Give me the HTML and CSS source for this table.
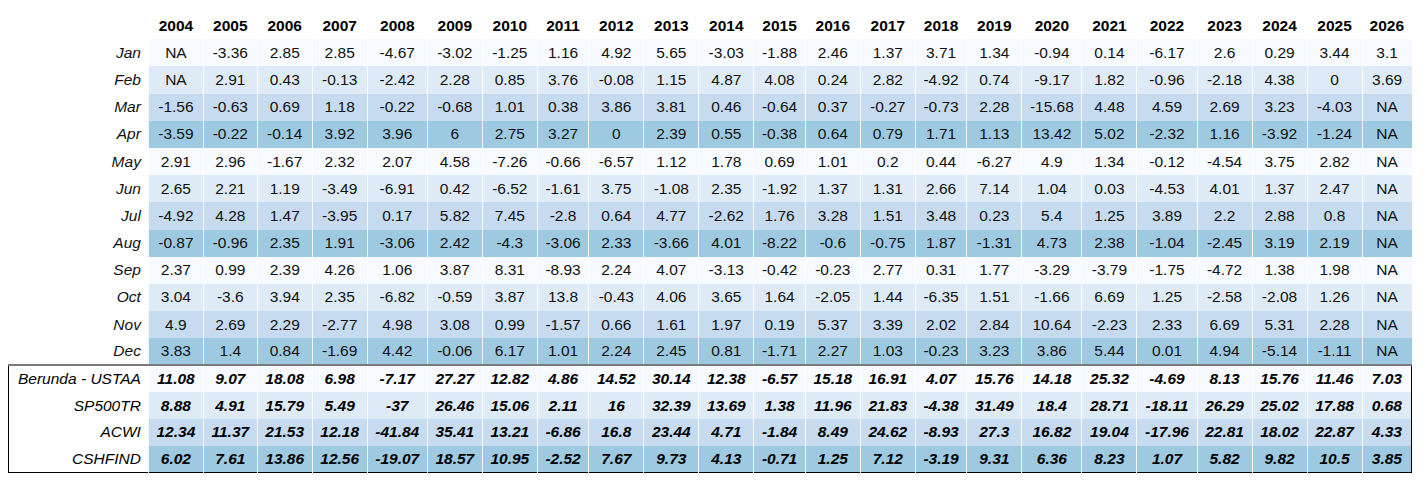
FILE: index.html
```html
<!DOCTYPE html>
<html>
<head>
<meta charset="utf-8">
<link rel="stylesheet" href="styles.css">
</head>
<body>
<table class="tbl">
<thead>
<tr class="hdr"><th class="lab"></th><th>2004</th><th>2005</th><th>2006</th><th>2007</th><th>2008</th><th>2009</th><th>2010</th><th>2011</th><th>2012</th><th>2013</th><th>2014</th><th>2015</th><th>2016</th><th>2017</th><th>2018</th><th>2019</th><th>2020</th><th>2021</th><th>2022</th><th>2023</th><th>2024</th><th>2025</th><th>2026</th></tr>
</thead>
<tbody class="months">
<tr class="c1"><td class="lab">Jan</td><td>NA</td><td>-3.36</td><td>2.85</td><td>2.85</td><td>-4.67</td><td>-3.02</td><td>-1.25</td><td>1.16</td><td>4.92</td><td>5.65</td><td>-3.03</td><td>-1.88</td><td>2.46</td><td>1.37</td><td>3.71</td><td>1.34</td><td>-0.94</td><td>0.14</td><td>-6.17</td><td>2.6</td><td>0.29</td><td>3.44</td><td>3.1</td></tr>
<tr class="c2"><td class="lab">Feb</td><td>NA</td><td>2.91</td><td>0.43</td><td>-0.13</td><td>-2.42</td><td>2.28</td><td>0.85</td><td>3.76</td><td>-0.08</td><td>1.15</td><td>4.87</td><td>4.08</td><td>0.24</td><td>2.82</td><td>-4.92</td><td>0.74</td><td>-9.17</td><td>1.82</td><td>-0.96</td><td>-2.18</td><td>4.38</td><td>0</td><td>3.69</td></tr>
<tr class="c3"><td class="lab">Mar</td><td>-1.56</td><td>-0.63</td><td>0.69</td><td>1.18</td><td>-0.22</td><td>-0.68</td><td>1.01</td><td>0.38</td><td>3.86</td><td>3.81</td><td>0.46</td><td>-0.64</td><td>0.37</td><td>-0.27</td><td>-0.73</td><td>2.28</td><td>-15.68</td><td>4.48</td><td>4.59</td><td>2.69</td><td>3.23</td><td>-4.03</td><td>NA</td></tr>
<tr class="c4"><td class="lab">Apr</td><td>-3.59</td><td>-0.22</td><td>-0.14</td><td>3.92</td><td>3.96</td><td>6</td><td>2.75</td><td>3.27</td><td>0</td><td>2.39</td><td>0.55</td><td>-0.38</td><td>0.64</td><td>0.79</td><td>1.71</td><td>1.13</td><td>13.42</td><td>5.02</td><td>-2.32</td><td>1.16</td><td>-3.92</td><td>-1.24</td><td>NA</td></tr>
<tr class="c1"><td class="lab">May</td><td>2.91</td><td>2.96</td><td>-1.67</td><td>2.32</td><td>2.07</td><td>4.58</td><td>-7.26</td><td>-0.66</td><td>-6.57</td><td>1.12</td><td>1.78</td><td>0.69</td><td>1.01</td><td>0.2</td><td>0.44</td><td>-6.27</td><td>4.9</td><td>1.34</td><td>-0.12</td><td>-4.54</td><td>3.75</td><td>2.82</td><td>NA</td></tr>
<tr class="c2"><td class="lab">Jun</td><td>2.65</td><td>2.21</td><td>1.19</td><td>-3.49</td><td>-6.91</td><td>0.42</td><td>-6.52</td><td>-1.61</td><td>3.75</td><td>-1.08</td><td>2.35</td><td>-1.92</td><td>1.37</td><td>1.31</td><td>2.66</td><td>7.14</td><td>1.04</td><td>0.03</td><td>-4.53</td><td>4.01</td><td>1.37</td><td>2.47</td><td>NA</td></tr>
<tr class="c3"><td class="lab">Jul</td><td>-4.92</td><td>4.28</td><td>1.47</td><td>-3.95</td><td>0.17</td><td>5.82</td><td>7.45</td><td>-2.8</td><td>0.64</td><td>4.77</td><td>-2.62</td><td>1.76</td><td>3.28</td><td>1.51</td><td>3.48</td><td>0.23</td><td>5.4</td><td>1.25</td><td>3.89</td><td>2.2</td><td>2.88</td><td>0.8</td><td>NA</td></tr>
<tr class="c4"><td class="lab">Aug</td><td>-0.87</td><td>-0.96</td><td>2.35</td><td>1.91</td><td>-3.06</td><td>2.42</td><td>-4.3</td><td>-3.06</td><td>2.33</td><td>-3.66</td><td>4.01</td><td>-8.22</td><td>-0.6</td><td>-0.75</td><td>1.87</td><td>-1.31</td><td>4.73</td><td>2.38</td><td>-1.04</td><td>-2.45</td><td>3.19</td><td>2.19</td><td>NA</td></tr>
<tr class="c1"><td class="lab">Sep</td><td>2.37</td><td>0.99</td><td>2.39</td><td>4.26</td><td>1.06</td><td>3.87</td><td>8.31</td><td>-8.93</td><td>2.24</td><td>4.07</td><td>-3.13</td><td>-0.42</td><td>-0.23</td><td>2.77</td><td>0.31</td><td>1.77</td><td>-3.29</td><td>-3.79</td><td>-1.75</td><td>-4.72</td><td>1.38</td><td>1.98</td><td>NA</td></tr>
<tr class="c2"><td class="lab">Oct</td><td>3.04</td><td>-3.6</td><td>3.94</td><td>2.35</td><td>-6.82</td><td>-0.59</td><td>3.87</td><td>13.8</td><td>-0.43</td><td>4.06</td><td>3.65</td><td>1.64</td><td>-2.05</td><td>1.44</td><td>-6.35</td><td>1.51</td><td>-1.66</td><td>6.69</td><td>1.25</td><td>-2.58</td><td>-2.08</td><td>1.26</td><td>NA</td></tr>
<tr class="c3"><td class="lab">Nov</td><td>4.9</td><td>2.69</td><td>2.29</td><td>-2.77</td><td>4.98</td><td>3.08</td><td>0.99</td><td>-1.57</td><td>0.66</td><td>1.61</td><td>1.97</td><td>0.19</td><td>5.37</td><td>3.39</td><td>2.02</td><td>2.84</td><td>10.64</td><td>-2.23</td><td>2.33</td><td>6.69</td><td>5.31</td><td>2.28</td><td>NA</td></tr>
<tr class="c4"><td class="lab">Dec</td><td>3.83</td><td>1.4</td><td>0.84</td><td>-1.69</td><td>4.42</td><td>-0.06</td><td>6.17</td><td>1.01</td><td>2.24</td><td>2.45</td><td>0.81</td><td>-1.71</td><td>2.27</td><td>1.03</td><td>-0.23</td><td>3.23</td><td>3.86</td><td>5.44</td><td>0.01</td><td>4.94</td><td>-5.14</td><td>-1.11</td><td>NA</td></tr>
</tbody>
<tbody class="summary">
<tr class="c1"><td class="lab">Berunda - USTAA</td><td>11.08</td><td>9.07</td><td>18.08</td><td>6.98</td><td>-7.17</td><td>27.27</td><td>12.82</td><td>4.86</td><td>14.52</td><td>30.14</td><td>12.38</td><td>-6.57</td><td>15.18</td><td>16.91</td><td>4.07</td><td>15.76</td><td>14.18</td><td>25.32</td><td>-4.69</td><td>8.13</td><td>15.76</td><td>11.46</td><td>7.03</td></tr>
<tr class="c2"><td class="lab">SP500TR</td><td>8.88</td><td>4.91</td><td>15.79</td><td>5.49</td><td>-37</td><td>26.46</td><td>15.06</td><td>2.11</td><td>16</td><td>32.39</td><td>13.69</td><td>1.38</td><td>11.96</td><td>21.83</td><td>-4.38</td><td>31.49</td><td>18.4</td><td>28.71</td><td>-18.11</td><td>26.29</td><td>25.02</td><td>17.88</td><td>0.68</td></tr>
<tr class="c3"><td class="lab">ACWI</td><td>12.34</td><td>11.37</td><td>21.53</td><td>12.18</td><td>-41.84</td><td>35.41</td><td>13.21</td><td>-6.86</td><td>16.8</td><td>23.44</td><td>4.71</td><td>-1.84</td><td>8.49</td><td>24.62</td><td>-8.93</td><td>27.3</td><td>16.82</td><td>19.04</td><td>-17.96</td><td>22.81</td><td>18.02</td><td>22.87</td><td>4.33</td></tr>
<tr class="c4"><td class="lab">CSHFIND</td><td>6.02</td><td>7.61</td><td>13.86</td><td>12.56</td><td>-19.07</td><td>18.57</td><td>10.95</td><td>-2.52</td><td>7.67</td><td>9.73</td><td>4.13</td><td>-0.71</td><td>1.25</td><td>7.12</td><td>-3.19</td><td>9.31</td><td>6.36</td><td>8.23</td><td>1.07</td><td>5.82</td><td>9.82</td><td>10.5</td><td>3.85</td></tr>
</tbody>
</table>
</body>
</html>
```

FILE: styles.css
```css
body {
  margin: 8px;
  background: #ffffff;
  font-family: "Liberation Sans", Arial, sans-serif;
  font-size: 15.5px;
  color: #111111;
}

.tbl {
  border-collapse: collapse;
  margin-top: 4px;
}

.tbl tr {
  height: 27.2px;
}

.tbl .summary tr {
  height: 26.8px;
}

.tbl th,
.tbl td {
  padding: 0 7.6px;
  text-align: center;
  vertical-align: middle;
  white-space: nowrap;
}

.tbl th {
  font-weight: bold;
  color: #000000;
}

.tbl td + td {
  border-left: 1px solid rgba(255, 255, 255, 0.85);
}

.tbl td.lab,
.tbl th.lab {
  padding: 0 7px 0 9px;
}

.tbl td.lab {
  text-align: right;
  font-style: italic;
  background: #ffffff;
}

.c1 td { background: #f7fbff; }
.c2 td { background: #deebf7; }
.c3 td { background: #c6dbef; }
.c4 td { background: #9ecae1; }

.summary {
  border: 1px solid #000000;
  border-top: 2px solid #7a7a7a;
}

.summary td {
  font-weight: bold;
  font-style: italic;
  color: #000000;
}

.summary td.lab {
  font-weight: normal;
}
```
